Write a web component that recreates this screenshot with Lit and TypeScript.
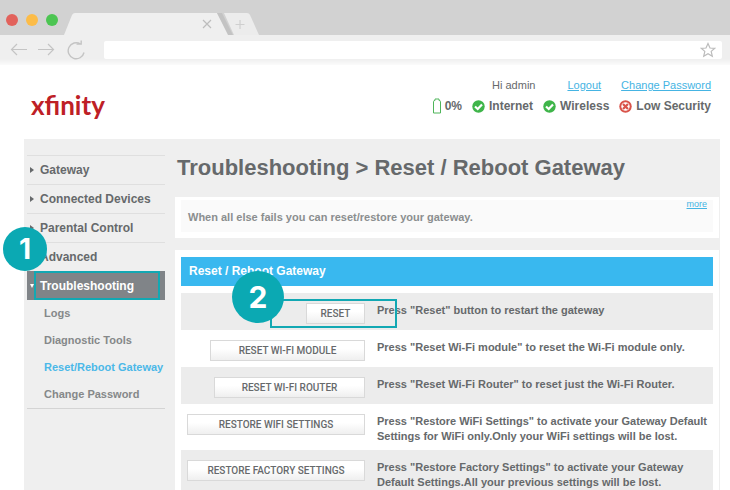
import { LitElement, html, css, svg } from "lit";
import { customElement } from "lit/decorators.js";
import { classMap } from "lit/directives/class-map.js";

const actions = [
  { label: "RESET", size: "w-reset", text: 'Press "Reset" button to restart the gateway' },
  { label: "RESET WI-FI MODULE", size: "w-module", text: 'Press "Reset Wi-Fi module" to reset the Wi-Fi module only.' },
  { label: "RESET WI-FI ROUTER", size: "w-router", text: 'Press "Reset Wi-Fi Router" to reset just the Wi-Fi Router.' },
  { label: "RESTORE WIFI SETTINGS", size: "w-restore", text: 'Press "Restore WiFi Settings" to activate your Gateway Default Settings for WiFi only.Only your WiFi settings will be lost.' },
  { label: "RESTORE FACTORY SETTINGS", size: "w-restore", text: 'Press "Restore Factory Settings" to activate your Gateway Default Settings.All your previous settings will be lost.' },
];

const sections = ["Gateway", "Connected Devices", "Parental Control", "Advanced", "Troubleshooting"];
const pages = ["Logs", "Diagnostic Tools", "Reset/Reboot Gateway", "Change Password"];

@customElement("browser-chrome")
export class BrowserChrome extends LitElement {
  static styles = css`
    :host { display: block; }
    .strip { display: flex; align-items: flex-end; height: 35px; background: #d2d2d2; }
    .lights { display: flex; gap: 8px; padding: 0 0 9px 6px; }
    .light { width: 12px; height: 12px; border-radius: 50%; }
    .red { background: #e2625c; }
    .amber { background: #fcbc48; }
    .green { background: #4cc552; }
    .tabs { display: block; margin-left: 6px; }
    .bar { display: flex; align-items: center; height: 30px; padding-right: 8px; background: linear-gradient(#efefef 24px, #fbfbfb); }
    .tool { display: block; border: 0; padding: 0; background: none; height: 20px; }
    .tool svg { display: block; }
    .tools { display: flex; gap: 9px; padding-left: 10px; width: 94px; }
    .address { display: flex; flex: 1; align-items: center; height: 18px; background: #fff; border-radius: 2px; padding-right: 6px; }
    input { flex: 1; min-width: 0; height: 18px; border: 0; padding: 0 6px; background: none; outline: none; box-sizing: border-box; font: 12px "Liberation Sans", sans-serif; }
  `;
  render() {
    return html`
      <div class="strip">
        <div class="lights"><span class="light red"></span><span class="light amber"></span><span class="light green"></span></div>
        <svg class="tabs" width="198" height="23" viewBox="0 0 198 23" aria-hidden="true">
          <path d="M0 23 L8 3 Q9 1 11 1 H153 L165 23Z" fill="#efefef" />
          <path d="M153 1 H158 L169 23 H164Z" fill="#c3c3c3" />
          <path d="M160 1 H183 Q185 1 186 3 L195 23 H170Z" fill="#ececec" />
          <path d="M139 8 l8 8 M147 8 l-8 8 " stroke="#bdbdbd" stroke-width="1.200" fill="none" />
          <path d="M176 8 v9 M171.500 12.500 h9" stroke="#cfcfcf" stroke-width="1.200" fill="none" />
        </svg>
      </div>
      <div class="bar">
        <div class="tools">
          <button class="tool" aria-label="Back"><svg width="18" height="20" viewBox="0 0 18 20"><path d="M7 4 L1.500 9.500 L7 15 M1.500 9.500 H17" fill="none" stroke="#c4c4c4" stroke-width="1.200" /></svg></button>
          <button class="tool" aria-label="Forward"><svg width="18" height="20" viewBox="0 0 18 20"><path d="M11 4 L16.500 9.500 L11 15 M16.500 9.500 H1" fill="none" stroke="#c4c4c4" stroke-width="1.200" /></svg></button>
          <button class="tool" aria-label="Reload"><svg width="22" height="20" viewBox="0 0 22 20"><path d="M16.500 4 A8 8 0 1 0 20 12.500 M12.500 4 H17.200 V0.500" fill="none" stroke="#c4c4c4" stroke-width="1.400" /></svg></button>
        </div>
        <div class="address">
          <input aria-label="Address" />
          <svg width="16" height="16" viewBox="0 0 16 16"><path d="M8 1.500 L10 6 L14.800 6.300 L11.200 9.400 L12.300 14.300 L8 11.700 L3.700 14.300 L4.800 9.400 L1.200 6.300 L6 6Z" fill="none" stroke="#bcbcbc" stroke-width="1.200" /></svg>
        </div>
      </div>
    `;
  }
}

@customElement("app-root")
export class AppRoot extends LitElement {
  static styles = css`
    :host { display: block; min-height: 100vh; background: #fff; color: #66696b; font: bold 11px/15px "Liberation Sans", Arial, sans-serif; }
    a { text-decoration: none; color: inherit; }
    header { display: flex; justify-content: space-between; height: 74px; padding: 0 19px 0 31px; }
    .logo { font: bold 26px/30px Lato, sans-serif; color: #be2026; padding-top: 25px; }
    .account { display: flex; flex-direction: column; align-items: flex-end; gap: 5px; padding-top: 13px; }
    .links { display: flex; gap: 20px; font-weight: normal; }
    .hi { margin-right: 12px; }
    .links a, .more { color: #45b4e3; text-decoration: underline; }
    .status { display: flex; gap: 10px; font-size: 12px; }
    .state { display: flex; align-items: center; gap: 4px; }
    .layout { display: grid; grid-template-columns: 151px minmax(0, 1fr); margin: 0 10px 0 24px; min-height: calc(100vh - 139px); background: #efefef; }
    nav { padding: 16px 10px 0 3px; }
    ul { list-style: none; margin: 0; padding: 0; }
    .section { position: relative; border-top: 1px solid #dfdfdf; }
    .section a { display: flex; align-items: center; height: 28px; gap: 6px; padding-left: 3px; font-size: 12px; }
    .section a::before { content: ""; width: 4px; border: solid transparent; border-width: 3px 0 3px 4px; border-left-color: #66696b; box-sizing: border-box; }
    .section.open { background: #808488; color: #fff; border-top-color: #808488; }
    .section.open a::before { border-width: 4px 2px 0 2px; border-color: #fff transparent; }
    .pages { border-bottom: 1px solid #d4d4d4; color: #858889; }
    .pages a { display: block; height: 27px; line-height: 27px; padding-left: 17px; white-space: nowrap; }
    .pages .here { color: #4bb8e8; }
    .frame { position: absolute; border: 2px solid #12a8b3; box-sizing: border-box; pointer-events: none; }
    .frame-nav { left: 7px; right: 5px; top: -1px; height: 29px; }
    .frame-row { left: 89px; width: 127px; top: 6px; height: 29px; }
    .badge { position: absolute; display: flex; align-items: center; justify-content: center; border-radius: 50%; background: #0ba9b3; color: #fff; font-family: Inter, sans-serif; font-weight: bold; pointer-events: none; }
    .badge-one { left: -24px; top: -45px; width: 44px; height: 44px; font-size: 28px; }
    .badge-two { left: 51px; top: -22px; width: 52px; height: 52px; font-size: 30px; }
    h1 { margin: 0; padding: 0 2px; font-size: 22px; line-height: 58px; white-space: nowrap; }
    .intro { display: flex; background: #fff; margin-right: 1px; padding: 3px 6px 6px; }
    .intro p { flex: 1; margin: 0; padding: 10px 7px 7px; color: #8b8e8f; background: #fafafa; }
    .intro .more { font-size: 9px; line-height: 9px; font-weight: normal; padding-right: 6px; background: #fafafa; }
    .panel { background: #fff; margin: 12px 1px 0 0; padding: 7px 6px 0; }
    h2 { margin: 0 0 7px; padding-left: 8px; font-size: 12px; line-height: 29px; background: #39b8ef; color: #fff; }
    .row { position: relative; display: grid; grid-template-columns: 184px minmax(0, 1fr); gap: 12px; min-height: 21px; padding: 10px 0 6px; }
    .row:nth-child(odd) { background: #ececec; }
    .row:last-child { padding-bottom: 0; }
    .row p { margin: 0; }
    .cell { display: flex; justify-content: flex-end; align-items: flex-start; }
    .cell button { height: 21px; border: 1px solid #d9d9d9; background: linear-gradient(#fff 40%, #efefef); padding: 0; color: #66696b; font: 500 10px/18px Roboto, sans-serif; white-space: nowrap; }
    .w-reset { width: 59px; }
    .w-module { width: 155px; }
    .w-router { width: 151px; }
    .w-restore { width: 178px; }
  `;

  private mark(ok: boolean) {
    return html`<svg width="13" height="13" viewBox="0 0 13 13" aria-hidden="true">
      <circle cx="6.500" cy="6.500" r="6.200" fill=${ok ? "#3fb54a" : "#d9534a"} />
      ${ok
        ? svg`<path d="M3 6.500 L5.700 9 L10 4.500" fill="none" stroke="#fff" stroke-width="2.200" />`
        : svg`<circle cx="6.500" cy="6.500" r="4.200" fill="#fff" /><path d="M4 4 L9 9 M9 4 L4 9" stroke="#d9534a" stroke-width="2.200" />`}
    </svg>`;
  }

  render() {
    return html`
      <browser-chrome></browser-chrome>
      <header>
        <div class="logo">xfinity</div>
        <div class="account">
          <div class="links"><span class="hi">Hi admin</span><a href="#logout">Logout</a><a href="#password">Change Password</a></div>
          <div class="status">
            <span class="state"><svg width="8" height="16" viewBox="0 0 8 16" aria-hidden="true"><path d="M0.500 3.500 Q0.500 2.500 2 2.500 V1 H6 V2.500 Q7.500 2.500 7.500 3.500 V15 H0.500Z" fill="#fff" stroke="#4fb55a" /></svg>0%</span>
            <span class="state">${this.mark(true)}Internet</span>
            <span class="state">${this.mark(true)}Wireless</span>
            <span class="state">${this.mark(false)}Low Security</span>
          </div>
        </div>
      </header>
      <div class="layout">
        <nav>
          <ul>
            ${sections.map((name) => {
              const open = name === "Troubleshooting";
              return html`<li class=${classMap({ section: true, open })}>
                <a href="#section">${name}</a>
                ${open ? html`<span class="frame frame-nav"></span><span class="badge badge-one">1</span>` : ""}
              </li>`;
            })}
          </ul>
          <ul class="pages">
            ${pages.map((name) => html`<li><a class=${classMap({ here: name === "Reset/Reboot Gateway" })} href="#page">${name}</a></li>`)}
          </ul>
        </nav>
        <main>
          <h1>Troubleshooting &gt; Reset / Reboot Gateway</h1>
          <div class="intro"><p>When all else fails you can reset/restore your gateway.</p><a class="more" href="#more">more</a></div>
          <section class="panel">
            <h2>Reset / Reboot Gateway</h2>
            <div class="rows">
              ${actions.map((item, i) => html`<div class="row">
                <div class="cell"><button class=${item.size}>${item.label}</button></div>
                <p>${item.text}</p>
                ${i === 0 ? html`<span class="frame frame-row"></span><span class="badge badge-two">2</span>` : ""}
              </div>`)}
            </div>
          </section>
        </main>
      </div>
    `;
  }
}
